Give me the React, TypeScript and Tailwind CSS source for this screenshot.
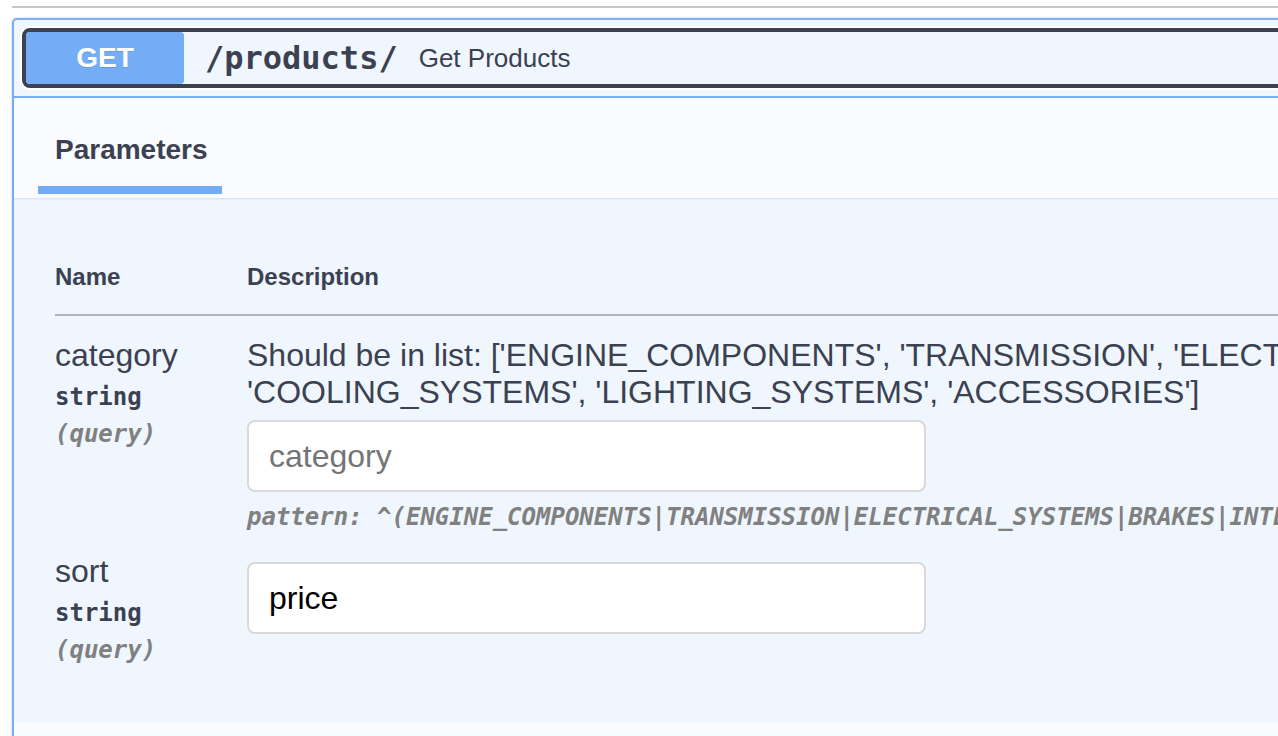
import React from 'react';

const mono = "font-['DejaVu_Sans_Mono',monospace]";

const ParamName = ({ name, type, where }: { name: string; type: string; where: string }) => (
    <div className="w-[192px] shrink-0">
        <div className="text-[32px] leading-[37px]">{name}</div>
        <div className={`${mono} mt-[9px] text-[24px] leading-[28px] font-bold`}>{type}</div>
        <div className={`${mono} mt-[9px] text-[24px] leading-[28px] font-bold italic text-[#808080]`}>{where}</div>
    </div>
);

const Field = ({ placeholder, value }: { placeholder: string; value?: string }) => (
    <input
        placeholder={placeholder}
        defaultValue={value}
        className="block h-[72px] w-[679px] rounded-[8px] border-2 border-[#d9d9d9] bg-white px-5 text-[32px] text-black outline-none placeholder:text-[#757575]"
    />
);

export default function App() {
    return (
        <div className="min-h-screen overflow-hidden bg-white font-['Liberation_Sans',Arial,sans-serif] text-[#3b4151]">
            <div className="pl-3 pt-1.5">
                <div className="h-[2px] w-[1300px] bg-[#c6c7cb]" />

                <div className="mt-[10px] w-[1320px] rounded-[5px] border-2 border-[#78aef5] bg-[#eff6fe] shadow-[0_0_3px_rgba(0,0,0,0.19)]">
                    {/* Summary */}
                    <div className="border-b-2 border-[#78aef5] p-2">
                        <div className="flex h-[60px] items-center rounded-[8px] border-4 border-[#3b4151] shadow-[0_0_0_2px_white]">
                            <div className="flex h-full w-[158px] items-center justify-center rounded-[4px] bg-[#74adf6] text-[28px] font-bold text-white [text-shadow:0_1px_0_rgba(0,0,0,0.1)]">
                                GET
                            </div>
                            <span className={`${mono} px-[21px] text-[32px] font-bold`}>/products/</span>
                            <span className="text-[26px]">Get Products</span>
                        </div>
                    </div>

                    {/* Tab header */}
                    <div className="bg-[#f9fbfe] shadow-[0_1px_2px_rgba(0,0,0,0.1)]">
                        <div className="ml-6 w-[184px] pt-9 pb-1">
                            <div className="px-[17px] text-[28px] leading-[32px] font-bold">Parameters</div>
                            <div className="mt-5 h-2 bg-[#74adf6]" />
                        </div>
                    </div>

                    {/* Parameters table */}
                    <div className="pl-[41px] pt-[65px] pb-[58px]">
                        <div className="flex border-b-2 border-[#acb2bd] pb-[23px] text-[24px] leading-[28px] font-bold">
                            <div className="w-[192px]">Name</div>
                            <div>Description</div>
                        </div>

                        <div className="flex pt-[21px]">
                            <ParamName name="category" type="string" where="(query)" />
                            <div className="min-w-0">
                                <div className="whitespace-nowrap text-[32px] leading-[37px]">
                                    Should be in list: ['ENGINE_COMPONENTS', 'TRANSMISSION', 'ELECTRICAL_SYSTEMS', 'BRAKES', 'INTERIOR',
                                    <br />
                                    'COOLING_SYSTEMS', 'LIGHTING_SYSTEMS', 'ACCESSORIES']
                                </div>
                                <div className="mt-[9px]">
                                    <Field placeholder="category" />
                                </div>
                                <div className={`${mono} mt-[11px] whitespace-nowrap text-[24px] leading-[28px] font-bold italic text-[#808080]`}>
                                    pattern: ^(ENGINE_COMPONENTS|TRANSMISSION|ELECTRICAL_SYSTEMS|BRAKES|INTERIOR|COOLING_SYSTEMS|LIGHTING_SYSTEMS|ACCESSORIES)$
                                </div>
                            </div>
                        </div>

                        <div className="mt-[22px] flex">
                            <ParamName name="sort" type="string" where="(query)" />
                            <div className="pt-[9px]">
                                <Field placeholder="sort" value="price" />
                            </div>
                        </div>
                    </div>

                    <div className="h-10 bg-[#f9fbfe]" />
                </div>
            </div>
        </div>
    );
}
